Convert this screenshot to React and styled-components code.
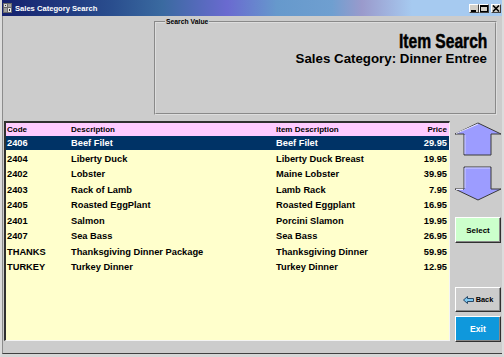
import React from 'react';
import styled, { createGlobalStyle } from 'styled-components';

const GlobalStyle = createGlobalStyle`
  html, body {
    margin: 0;
    padding: 0;
    overflow: hidden;
    background: #cccccc;
  }
`;

const rows = [
  { code: '2406', desc: 'Beef Filet', item: 'Beef Filet', price: '29.95' },
  { code: '2404', desc: 'Liberty Duck', item: 'Liberty Duck Breast', price: '19.95' },
  { code: '2402', desc: 'Lobster', item: 'Maine Lobster', price: '39.95' },
  { code: '2403', desc: 'Rack of Lamb', item: 'Lamb Rack', price: '7.95' },
  { code: '2405', desc: 'Roasted EggPlant', item: 'Roasted Eggplant', price: '16.95' },
  { code: '2401', desc: 'Salmon', item: 'Porcini Slamon', price: '19.95' },
  { code: '2407', desc: 'Sea Bass', item: 'Sea Bass', price: '26.95' },
  { code: 'THANKS', desc: 'Thanksgiving Dinner Package', item: 'Thanksgiving Dinner', price: '59.95' },
  { code: 'TURKEY', desc: 'Turkey Dinner', item: 'Turkey Dinner', price: '12.95' },
];

export default function App() {
  return (
    <>
      <GlobalStyle />
      <Window>
        <TitleBar>
          <AppIcon />
          <Title>Sales Category Search</Title>
          <Caption>
            <CaptionButton aria-label='minimize'>
              <svg width='8' height='7' viewBox='0 0 8 7'>
                <rect x='1' y='5' width='5' height='2' fill='#000' />
              </svg>
            </CaptionButton>
            <CaptionButton aria-label='maximize'>
              <svg width='8' height='7' viewBox='0 0 8 7'>
                <rect x='0.5' y='0.5' width='7' height='6' fill='none' stroke='#000' />
                <rect x='0' y='0' width='8' height='2' fill='#000' />
              </svg>
            </CaptionButton>
            <CaptionButton $close aria-label='close'>
              <svg width='8' height='7' viewBox='0 0 8 7'>
                <path d='M1 0.5 L7 6.5 M7 0.5 L1 6.5' stroke='#000' strokeWidth='1.6' />
              </svg>
            </CaptionButton>
          </Caption>
        </TitleBar>

        <Body>
          <TopRow>
            <SearchBox>
              <Legend>Search Value</Legend>
              <Heading>Item Search</Heading>
              <SubHeading>Sales Category: Dinner Entree</SubHeading>
            </SearchBox>
          </TopRow>

          <BottomRow>
            <Grid>
              <HeaderRow>
                <span>Code</span>
                <span>Description</span>
                <span>Item Description</span>
                <Price>Price</Price>
              </HeaderRow>
              {rows.map((r, i) => (
                <Row key={r.code} $selected={i === 0}>
                  <span>{r.code}</span>
                  <span>{r.desc}</span>
                  <span>{r.item}</span>
                  <Price>{r.price}</Price>
                </Row>
              ))}
            </Grid>

            <Side>
              <ArrowButton aria-label='up' $h={34}>
                <svg width='48' height='34' viewBox='0 0 48 34'>
                  <polygon
                    points='24,1 47,12 37,12 37,33 10,33 10,12 1,12'
                    fill='#9c9cff'
                    stroke='#3a3a3a'
                  />
                  <polyline points='2,11.5 24,2 ' fill='none' stroke='#e8e8ff' />
                  <polyline points='11,13 11,32' fill='none' stroke='#d0d0ff' />
                </svg>
              </ArrowButton>
              <ArrowButton aria-label='down' $h={35} $mt={10}>
                <svg width='48' height='35' viewBox='0 0 48 35'>
                  <polygon
                    points='10,1 37,1 37,23 47,23 24,34 1,23 10,23'
                    fill='#9c9cff'
                    stroke='#3a3a3a'
                  />
                  <polyline points='11,22 11,2 36,2' fill='none' stroke='#d0d0ff' />
                  <polyline points='2,23.5 9,23.5' fill='none' stroke='#e8e8ff' />
                </svg>
              </ArrowButton>
              <Button $variant='select' $mt={16}>Select</Button>
              <Spacer />
              <Button $variant='back'>
                <svg width='11' height='8' viewBox='0 0 11 8'>
                  <polygon
                    points='0.5,4 4.5,0.5 4.5,2.5 10.5,2.5 10.5,5.5 4.5,5.5 4.5,7.5'
                    fill='#7fc8f0'
                    stroke='#1a3a5a'
                    strokeWidth='0.9'
                  />
                </svg>
                Back
              </Button>
              <Button $variant='exit' $mt={4}>Exit</Button>
            </Side>
          </BottomRow>
        </Body>
      </Window>
    </>
  );
}

const AppIcon = () => (
  <svg width='9' height='10' viewBox='0 0 9 10'>
    <rect x='0' y='0' width='9' height='10' fill='#6a6a6a' />
    <rect x='1' y='1' width='3' height='3' fill='#d8d8d8' />
    <rect x='5' y='1' width='3' height='3' fill='#a0a0a0' />
    <rect x='1' y='5' width='3' height='4' fill='#a0a0a0' />
    <rect x='5' y='5' width='3' height='4' fill='#e8e8e8' />
    <rect x='2' y='2' width='1' height='1' fill='#333' />
    <rect x='6' y='6' width='1' height='2' fill='#333' />
  </svg>
);

const Window = styled.div`
  width: 504px;
  height: 357px;
  box-sizing: border-box;
  display: flex;
  flex-direction: column;
  background: #cccccc;
  border-left: 2px solid #dcdcdc;
  border-right: 2px solid #dcdcdc;
  border-bottom: 3px solid #d6d6d6;
  font-family: 'Liberation Sans', Arial, sans-serif;
`;

const TitleBar = styled.div`
  height: 16px;
  flex: none;
  display: flex;
  align-items: center;
  gap: 3px;
  padding: 0 1px 0 1px;
  background: linear-gradient(
    90deg,
    #14206e 0%,
    #2a4e8e 22%,
    #3a6aa0 32%,
    #6a6ad0 45%,
    #6699cc 55%,
    #6f9fd0 66%,
    #9a9acc 72%,
    #a6caf0 82%,
    #a6caf0 100%
  );
`;

const Title = styled.span`
  color: #ffffff;
  font-size: 7.6px;
  font-weight: bold;
  flex: 1;
`;

const Caption = styled.div`
  display: flex;
  gap: 0;
`;

const CaptionButton = styled.button`
  width: 10px;
  height: 9px;
  padding: 0;
  margin-left: ${({ $close }) => ($close ? '2px' : '0')};
  display: flex;
  align-items: center;
  justify-content: center;
  background: #d4d0c8;
  border: 1px solid;
  border-color: #ffffff #404040 #404040 #ffffff;
  box-sizing: border-box;
`;

const Body = styled.div`
  flex: 1;
  display: flex;
  flex-direction: column;
  border-left: 1px solid #8c8c8c;
  border-bottom: 1px solid #404040;
`;

const TopRow = styled.div`
  height: 105px;
  flex: none;
  display: flex;
  justify-content: flex-end;
  align-items: flex-start;
  padding-right: 5px;
`;

const SearchBox = styled.fieldset`
  margin: 2px 0 0;
  width: 343px;
  height: 97px;
  box-sizing: border-box;
  border: 2px groove #dddddd;
  padding: 6px 8px 0 8px;
  display: flex;
  flex-direction: column;
  align-items: flex-end;
`;

const Legend = styled.legend`
  font-size: 6.8px;
  line-height: 8px;
  font-weight: bold;
  color: #000;
  padding: 0 1px;
  margin-left: 1px;
`;

const Heading = styled.div`
  font-family: 'Liberation Sans', Arial, sans-serif;
  font-weight: bold;
  font-size: 20px;
  line-height: 19px;
  margin-bottom: 1px;
  color: #000;
  -webkit-text-stroke: 0.5px #000;
  transform: scaleX(0.78);
  transform-origin: right center;
`;

const SubHeading = styled.div`
  font-size: 13.3px;
  line-height: 14px;
  font-weight: bold;
  color: #000;
`;

const BottomRow = styled.div`
  display: flex;
  align-items: flex-start;
  gap: 4px;
  padding-left: 1px;
`;

const Grid = styled.div`
  width: 446px;
  height: 220px;
  box-sizing: border-box;
  background: #ffffcc;
  border-style: solid;
  border-width: 2px 1px 1px 2px;
  border-color: #303030 #f4f4f4 #f4f4f4 #303030;
`;

const columns = `
  display: grid;
  grid-template-columns: 64px 205px 1fr auto;
  align-items: center;
  padding: 0 2px 0 1px;
  font-weight: bold;
  white-space: nowrap;
`;

const HeaderRow = styled.div`
  ${columns}
  height: 13px;
  background: #ffccff;
  font-size: 8px;
  color: #000;
`;

const Row = styled.div`
  ${columns}
  height: 14px;
  margin-bottom: 1.5px;
  font-size: 9.3px;
  background: ${({ $selected }) => ($selected ? '#003366' : 'transparent')};
  color: ${({ $selected }) => ($selected ? '#ffffff' : '#000000')};
`;

const Price = styled.span`
  text-align: right;
`;

const Side = styled.div`
  width: 48px;
  height: 221px;
  padding-top: 1px;
  box-sizing: border-box;
  display: flex;
  flex-direction: column;
  align-items: center;
`;

const ArrowButton = styled.button`
  width: 48px;
  height: ${({ $h }) => $h}px;
  margin-top: ${({ $mt }) => $mt || 0}px;
  padding: 0;
  border: none;
  background: transparent;
  display: block;
  flex: none;

  svg {
    display: block;
  }
`;

const variants = {
  select: { bg: '#ccffcc', color: '#000', size: '8px', h: 26 },
  back: { bg: '#cccccc', color: '#000', size: '7.4px', h: 25 },
  exit: { bg: '#0f98dc', color: '#fff', size: '8.6px', h: 26 },
};

const Button = styled.button`
  width: 46px;
  height: ${({ $variant }) => variants[$variant].h}px;
  margin-top: ${({ $mt }) => $mt || 0}px;
  flex: none;
  box-sizing: border-box;
  padding: 0;
  display: flex;
  align-items: center;
  justify-content: center;
  gap: 2px;
  font-family: 'Liberation Sans', Arial, sans-serif;
  font-weight: bold;
  font-size: ${({ $variant }) => variants[$variant].size};
  color: ${({ $variant }) => variants[$variant].color};
  background: ${({ $variant }) => variants[$variant].bg};
  border: 1px solid;
  border-color: #ffffff #303030 #303030 #ffffff;
  box-shadow: inset -1px -1px 0 #888888;
`;

const Spacer = styled.div`
  flex: 1;
`;
